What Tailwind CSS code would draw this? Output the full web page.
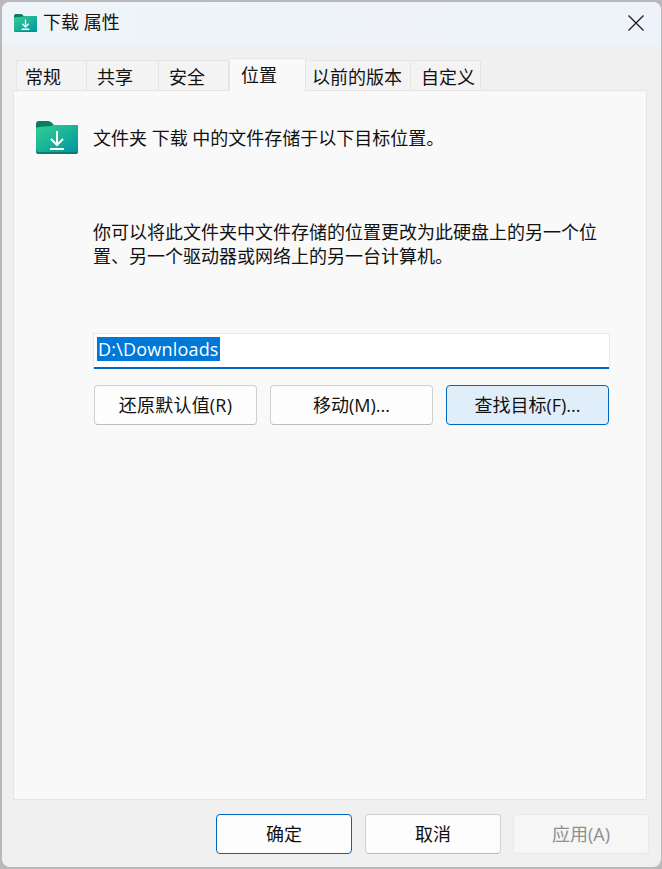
<!DOCTYPE html>
<html lang="zh-CN">
<head>
  <meta charset="UTF-8" />
  <title>下载 属性</title>
  <script src="https://cdn.jsdelivr.net/npm/@tailwindcss/browser@4"></script>
</head>
<body class="bg-[#b9b9b9] w-[662px] h-[869px] overflow-hidden font-['Open_Sans','Noto_Sans_CJK_SC',sans-serif] text-[18px] text-[#111]">
  <div class="ml-[2px] mt-[2px] w-[659px] h-[865px] rounded-[8px] bg-[#f0f0f0] overflow-hidden flex flex-col">

    <!-- title bar -->
    <div class="h-[43px] shrink-0 flex items-center bg-gradient-to-r from-[#eef4f7] to-[#eef2fa] pl-[12px]">
      <svg class="w-[23px] h-[18px] mt-[-2px]" viewBox="0 0 42 33">
        <defs>
          <linearGradient id="fa" x1="0" y1="0" x2="1" y2="1"><stop offset="0" stop-color="#34d08f"/><stop offset="1" stop-color="#0095a3"/></linearGradient>
        </defs>
        <path d="M0 3a3 3 0 0 1 3-3h9c2 0 3 1 4 2l3 3-19 3z" fill="#0a7d62"/>
        <rect x="0" y="4" width="42" height="29" rx="2" fill="#0a7d62"/>
        <path d="M0 9c0-2 1-3 3-3l12-1 2-1h23a2 2 0 0 1 2 2v24a2 2 0 0 1-2 2H2a2 2 0 0 1-2-2z" fill="url(#fa)"/>
        <path d="M21 10v13M15 18l6 6 6-6M14 28h14" fill="none" stroke="#fff" stroke-width="2.4"/>
      </svg>
      <span class="ml-[6px] leading-[24px] mt-[-4px]">下载 属性</span>
      <svg class="w-[16px] h-[16px] ml-auto mr-[17px] mt-[-2px]" viewBox="0 0 16 16">
        <path d="M.5.5l15 15M15.5.5l-15 15" fill="none" stroke="#1a1a1a" stroke-width="1.3"/>
      </svg>
    </div>

    <!-- tabs -->
    <div class="h-[45px] shrink-0 pl-[14px] flex items-end">
      <div class="w-[71px] h-[30px] border border-[#e5e5e5] border-b-0 rounded-t-[2px] bg-[#f3f3f3] pl-[8px] leading-[33px]">常规</div>
      <div class="w-[72px] h-[30px] border border-[#e5e5e5] border-b-0 border-l-0 rounded-t-[2px] bg-[#f3f3f3] pl-[10px] leading-[33px]">共享</div>
      <div class="w-[70px] h-[30px] border border-[#e5e5e5] border-b-0 border-l-0 rounded-t-[2px] bg-[#f3f3f3] pl-[10px] leading-[33px]">安全</div>
      <div class="relative z-10 w-[77px] h-[33px] mb-[-1px] border border-[#e5e5e5] border-b-0 rounded-t-[2px] bg-[#f9f9f9] pl-[11px] leading-[32px]">位置</div>
      <div class="w-[105px] h-[30px] border border-[#e5e5e5] border-b-0 border-l-0 rounded-t-[2px] bg-[#f3f3f3] pl-[6px] leading-[33px]">以前的版本</div>
      <div class="w-[70px] h-[30px] border border-[#e5e5e5] border-b-0 border-l-0 rounded-t-[2px] bg-[#f3f3f3] pl-[10px] leading-[33px]">自定义</div>
    </div>

    <!-- panel -->
    <div class="ml-[11px] w-[634px] h-[710px] shrink-0 border border-[#e5e5e5] bg-[#f9f9f9] pl-[22px]">
      <div class="flex items-start pt-[30px]">
        <svg class="w-[42px] h-[33px] shrink-0" viewBox="0 0 42 33">
          <defs>
            <linearGradient id="fb" x1="0" y1="0" x2="1" y2="1"><stop offset="0" stop-color="#34d08f"/><stop offset="1" stop-color="#0095a3"/></linearGradient>
          </defs>
          <path d="M0 3a3 3 0 0 1 3-3h9c2 0 3 1 4 2l3 3-19 3z" fill="#0a7d62"/>
          <rect x="0" y="4" width="42" height="29" rx="2" fill="#0a7d62"/>
          <path d="M0 9c0-2 1-3 3-3l12-1 2-1h23a2 2 0 0 1 2 2v23a2 2 0 0 1-2 2H2a2 2 0 0 1-2-2z" fill="url(#fb)"/>
          <path d="M21 10v13M15 18l6 6 6-6M14 28h14" fill="none" stroke="#fff" stroke-width="2"/>
        </svg>
        <p class="ml-[15px] leading-[24px] mt-[5px]">文件夹 下载 中的文件存储于以下目标位置。</p>
      </div>

      <p class="ml-[57px] mt-[66px] w-[516px] leading-[24px]">你可以将此文件夹中文件存储的位置更改为此硬盘上的另一个位置、另一个驱动器或网络上的另一台计算机。</p>

      <div class="ml-[57px] mt-[65px] w-[517px] h-[36px] bg-white border border-[#e8e8e8] border-b-0 shadow-[inset_0_-2px_0_#0067c0] pl-[3px] pt-[3px]">
        <span class="block w-max h-[24px] px-[1px] bg-[#0078d7] text-white leading-[24px] tracking-[0.2px]">D:\Downloads</span>
      </div>

      <div class="ml-[58px] mt-[16px] flex gap-[13px]">
        <div class="w-[163px] h-[40px] rounded-[4px] border border-[#d0d0d0] border-b-[#bcbcbc] bg-[#fdfdfd] flex items-center justify-center tracking-[0.2px]">还原默认值(R)</div>
        <div class="w-[163px] h-[40px] rounded-[4px] border border-[#d0d0d0] border-b-[#bcbcbc] bg-[#fdfdfd] flex items-center justify-center">移动(M)...</div>
        <div class="w-[163px] h-[40px] rounded-[4px] border border-[#0067c0] bg-[#e0eef9] flex items-center justify-center">查找目标(F)...</div>
      </div>
    </div>

    <!-- footer -->
    <div class="pl-[214px] pt-[14px] flex">
      <div class="w-[136px] h-[40px] rounded-[4px] border border-[#0067c0] bg-[#fdfdfd] flex items-center justify-center">确定</div>
      <div class="ml-[13px] w-[136px] h-[40px] rounded-[4px] border border-[#d0d0d0] border-b-[#bcbcbc] bg-[#fdfdfd] flex items-center justify-center">取消</div>
      <div class="ml-[12px] w-[136px] h-[40px] rounded-[4px] border border-[#e8e8e8] bg-[#f6f6f6] text-[#8f8f8f] flex items-center justify-center">应用(A)</div>
    </div>
  </div>
</body>
</html>
